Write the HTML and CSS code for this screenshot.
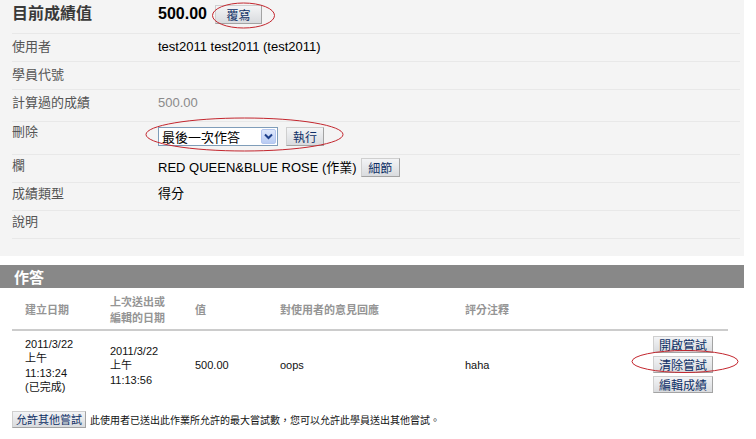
FILE: index.html
```html
<!DOCTYPE html>
<html lang="zh-Hant">
<head>
<meta charset="utf-8">
<title>成績</title>
<link rel="stylesheet" href="styles.css">
</head>
<body>
<div class="page">
  <section class="panel">
    <div class="row first">
      <div class="label big">目前成績值</div>
      <div class="value"><span class="grade">500.00</span><button class="btn btn-override">覆寫</button></div>
    </div>
    <div class="row">
      <div class="label">使用者</div>
      <div class="value">test2011 test2011 (test2011)</div>
    </div>
    <div class="row">
      <div class="label">學員代號</div>
      <div class="value"></div>
    </div>
    <div class="row tall">
      <div class="label">計算過的成績</div>
      <div class="value muted">500.00</div>
    </div>
    <div class="row del">
      <div class="label">刪除</div>
      <div class="value">
        <span class="select"><span class="select-text">最後一次作答</span><span class="select-arrow"><svg width="9" height="7" viewBox="0 0 9 7"><path d="M1 1.5 L4.5 5 L8 1.5" fill="none" stroke="#1d3f8a" stroke-width="2"/></svg></span></span>
        <button class="btn btn-go">執行</button>
      </div>
    </div>
    <div class="row tight">
      <div class="label">欄</div>
      <div class="value">RED QUEEN&amp;BLUE ROSE (作業)<button class="btn btn-detail">細節</button></div>
    </div>
    <div class="row tight">
      <div class="label">成績類型</div>
      <div class="value">得分</div>
    </div>
    <div class="row tight">
      <div class="label">說明</div>
      <div class="value"></div>
    </div>
  </section>

  <h2 class="bar">作答</h2>

  <table class="attempts">
    <colgroup>
      <col class="c1"><col class="c2"><col class="c3"><col class="c4"><col class="c5"><col class="c6">
    </colgroup>
    <thead>
      <tr>
        <th>建立日期</th>
        <th>上次送出或<br>編輯的日期</th>
        <th>值</th>
        <th>對使用者的意見回應</th>
        <th>評分注釋</th>
        <th></th>
      </tr>
    </thead>
    <tbody>
      <tr>
        <td>2011/3/22<br>上午<br>11:13:24<br>(已完成)</td>
        <td>2011/3/22<br>上午<br>11:13:56</td>
        <td>500.00</td>
        <td>oops</td>
        <td>haha</td>
        <td>
          <div class="actions">
            <button class="btn btn-small">開啟嘗試</button>
            <button class="btn btn-small">清除嘗試</button>
            <button class="btn btn-small">編輯成績</button>
          </div>
        </td>
      </tr>
    </tbody>
  </table>

  <div class="allow">
    <button class="btn btn-small btn-allow">允許其他嘗試</button>
    <span>此使用者已送出此作業所允許的最大嘗試數，您可以允許此學員送出其他嘗試。</span>
  </div>

  <svg class="marks" width="756" height="439" viewBox="0 0 756 439">
    <ellipse cx="243.5" cy="15.5" rx="31" ry="12.5" fill="none" stroke="#c3262e" stroke-width="1"/>
    <ellipse cx="244.5" cy="134.5" rx="98.5" ry="16.5" fill="none" stroke="#c3262e" stroke-width="1"/>
    <ellipse cx="685" cy="361.5" rx="53" ry="11" fill="none" stroke="#c3262e" stroke-width="1"/>
  </svg>
</div>
</body>
</html>
```

FILE: styles.css
```css
* { box-sizing: border-box; }

html, body {
  margin: 0;
  padding: 0;
  background: #ffffff;
}

body {
  font-family: "Liberation Sans", "Noto Sans CJK TC", Arial, sans-serif;
  font-size: 13px;
  color: #000;
}

.page {
  position: relative;
  width: 756px;
  height: 439px;
  overflow: hidden;
}

/* ---------- top panel ---------- */
.panel {
  width: 744px;
  height: 256px;
  background: #f4f4f4;
}

.row {
  display: flex;
  align-items: flex-start;
  margin-left: 12px;
  width: 728px;
  height: 28px;
  padding-top: 5px;
  border-bottom: 1px solid #e8e8e8;
  line-height: 16px;
}

.row.first { height: 34px; padding-top: 0; padding-bottom: 5px; align-items: center; }
.row.tall { height: 32px; }
.row.del { height: 33px; padding-top: 2px; }
.row.tight { padding-top: 3px; }

.label {
  width: 146px;
  flex: none;
  color: #555;
  font-size: 13px;
}

.label.big {
  font-size: 16px;
  font-weight: bold;
  color: #3a3a3a;
}

.value {
  display: flex;
  align-items: center;
  color: #000;
}

.value.muted { color: #8a8a8a; }

.grade {
  font-size: 16px;
  font-weight: bold;
  margin-right: 8px;
}

/* ---------- buttons ---------- */
.btn {
  font-family: "Noto Sans CJK TC", "Liberation Sans", sans-serif;
  font-size: 12px;
  line-height: 15px;
  color: #0d2f66;
  background: linear-gradient(#f3f4f6, #d9dbde);
  border: 1px solid #a3a3a3;
  border-top-color: #cfcfcf;
  border-left-color: #cfcfcf;
  border-radius: 0;
  padding: 1px 8px;
  margin: 0;
  cursor: pointer;
}

.btn-override { height: 19px; width: 47px; padding: 0; margin-top: 1px; }
.btn-go { height: 19px; width: 38px; padding: 0; margin-left: 8px; margin-top: 3px; }
.btn-detail { height: 19px; width: 39px; padding: 0; margin-left: 4px; }

.select {
  display: inline-flex;
  align-items: center;
  width: 120px;
  height: 19px;
  margin-top: 3px;
  background: #fff;
  border: 1px solid #7f9db9;
  font-family: "Noto Sans CJK TC", sans-serif;
  font-size: 13px;
}

.select-text {
  flex: 1;
  padding-left: 3px;
  line-height: 17px;
}

.select-arrow {
  width: 15px;
  height: 15px;
  margin-right: 1px;
  display: flex;
  align-items: center;
  justify-content: center;
  background: linear-gradient(#dfe8fb, #b8cbf3);
  border: 1px solid #b4c6ef;
  border-radius: 2px;
}

/* ---------- section bar ---------- */
.bar {
  margin: 9px 0 0;
  width: 744px;
  height: 23px;
  background: #888888;
  color: #fff;
  font-family: "Noto Sans CJK TC", sans-serif;
  font-size: 15px;
  font-weight: bold;
  line-height: 23px;
  padding-left: 14px;
}

/* ---------- attempts table ---------- */
.attempts {
  margin-left: 12px;
  width: 716px;
  border-collapse: collapse;
  table-layout: fixed;
  font-size: 11px;
}

.c1, .c2, .c3 { width: 85px; }
.c4 { width: 185px; }
.c5 { width: 188px; }
.c6 { width: 88px; }

.attempts th {
  height: 42px;
  text-align: left;
  vertical-align: middle;
  padding: 0 0 0 13px;
  font-family: "Noto Sans CJK TC", sans-serif;
  font-size: 11px;
  line-height: 16px;
  font-weight: bold;
  color: #959595;
  border-bottom: 2px solid #cccccc;
}

.attempts td {
  height: 70px;
  vertical-align: middle;
  padding: 0 0 0 13px;
  line-height: 14.5px;
  color: #111;
}

.actions {
  display: flex;
  flex-direction: column;
  gap: 3px;
  width: 60px;
  margin-top: -3px;
}

.btn-small {
  height: 17px;
  width: 60px;
  padding: 0;
  font-size: 12px;
  line-height: 15px;
}

/* ---------- allow more ---------- */
.allow {
  display: flex;
  align-items: center;
  gap: 4px;
  margin: 11px 0 0 12px;
  font-family: "Noto Sans CJK TC", sans-serif;
  font-size: 10px;
  color: #111;
}

.btn-allow {
  width: 74px;
  font-size: 11px;
}

/* ---------- annotation ellipses (drawn over content) ---------- */
.marks {
  position: absolute;
  left: 0;
  top: 0;
  pointer-events: none;
}
```
